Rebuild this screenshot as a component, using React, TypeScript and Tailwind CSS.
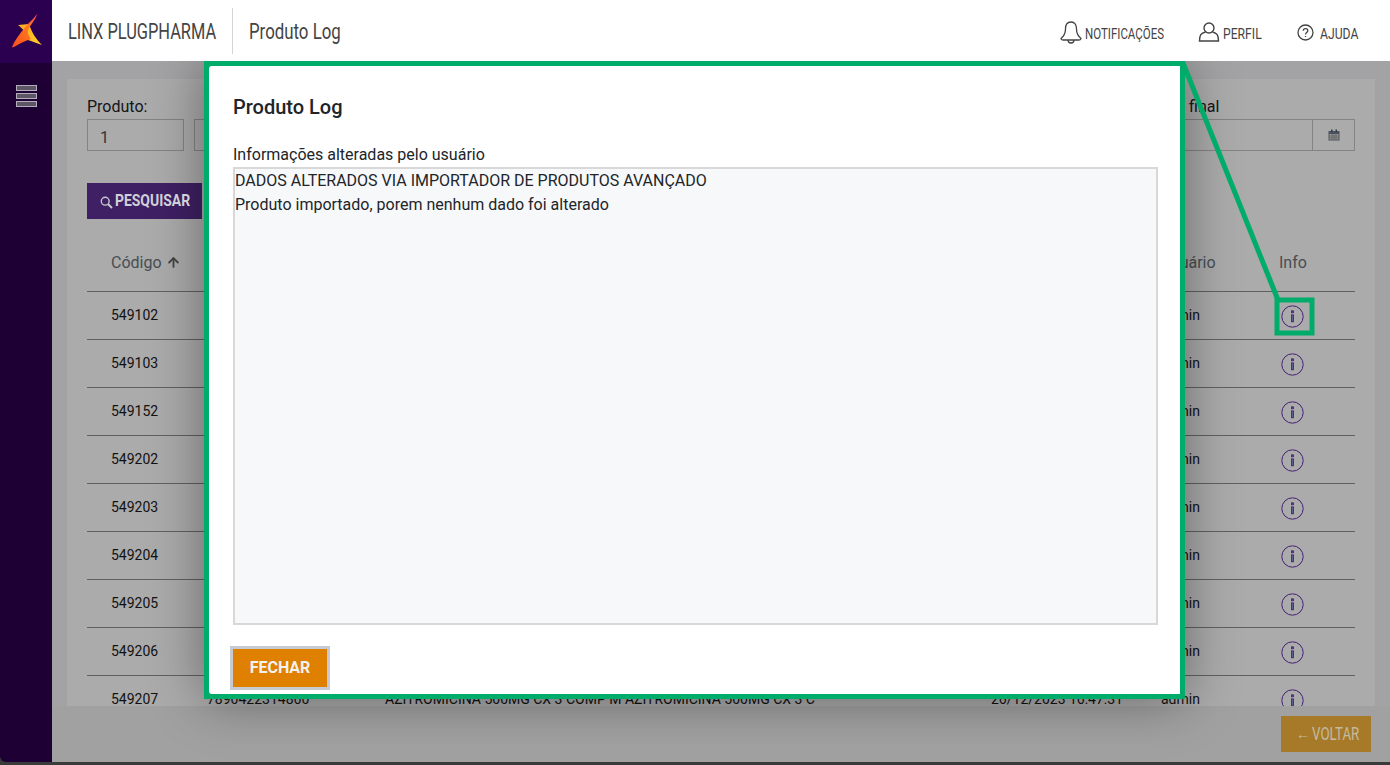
import { ArrowUp } from "lucide-react";

const rows = [
  "549102",
  "549103",
  "549152",
  "549202",
  "549203",
  "549204",
  "549205",
  "549206",
];

function InfoIcon() {
  return (
    <svg width="23" height="23" viewBox="0 0 23 23" fill="none" stroke="#6a2fb0" className="mt-[2px]">
      <circle cx="11.5" cy="11.5" r="10.7" strokeWidth="1" />
      <rect x="10.4" y="5.8" width="2.2" height="2" fill="#6a5ac0" strokeWidth="0.7" />
      <rect x="10.4" y="9.8" width="2.2" height="7" fill="#8a8ad0" strokeWidth="0.8" />
    </svg>
  );
}

function Row({ code }: { code: string }) {
  return (
    <div className="flex h-12 items-center border-t border-[#8f8f8f] text-sm text-[#1c1c1c]">
      <div className="w-[298px] pb-[1px] pl-6">{code}</div>
      <div className="flex-1" />
      <div className="w-[118px] pb-[1px]">admin</div>
      <div className="w-[76px] pl-[2px]">
        <InfoIcon />
      </div>
    </div>
  );
}

export default function App() {
  return (
    <div className="relative flex h-[765px] w-[1390px] overflow-hidden bg-[#3a3a3a] font-['Roboto',sans-serif]">
      {/* Sidebar */}
      <aside className="flex h-[762px] w-[52px] shrink-0 flex-col rounded-bl-md bg-[#1e0034]">
        <div className="flex h-[63px] items-center justify-center bg-[#2c0050] pb-[2px] pl-[2px]">
          <svg width="34" height="36" viewBox="0 0 34 36">
            <defs>
              <linearGradient id="bolt" x1="0" y1="1" x2="1" y2="0">
                <stop offset="0" stopColor="#f8481f" />
                <stop offset="0.6" stopColor="#ff7a1e" />
                <stop offset="1" stopColor="#f8405a" />
              </linearGradient>
              <linearGradient id="wing" x1="0" y1="0" x2="1" y2="1">
                <stop offset="0" stopColor="#ffa81e" />
                <stop offset="1" stopColor="#ffd02a" />
              </linearGradient>
            </defs>
            <path d="M8 12 L19 11 C22 20 26 26 32 32 C26 30 22 28 18 27 C17 20 12 15 8 12 Z" fill="url(#wing)" />
            <path d="M27 1 C24 5 20 9 17 12 C11 19 5 27 2 34 C3 34.5 4 34 5 33.5 C10 30 15 28 21 26 C18 22 17 19 19 15 C22 10 26 6 27 1 Z" fill="url(#bolt)" />
          </svg>
        </div>
        <div className="flex flex-col items-center gap-[2px] pt-[22px]">
          <div className="h-[6px] w-[21px] border border-[#b4aebc] bg-[#5f5569]" />
          <div className="h-[6px] w-[21px] border border-[#b4aebc] bg-[#5f5569]" />
          <div className="h-[6px] w-[21px] border border-[#b4aebc] bg-[#5f5569]" />
        </div>
      </aside>

      <div className="flex h-[762px] flex-1 flex-col">
        {/* Top bar */}
        <header className="relative z-20 flex h-[61px] shrink-0 items-center bg-white pl-4 text-[#444]">
          <span className="mt-[2px] w-[148px] origin-left scale-x-[.745] whitespace-nowrap text-[22px] leading-none">LINX PLUGPHARMA</span>
          <div className="ml-4 h-[46px] w-px bg-[#d4d4d4]" />
          <span className="ml-4 mt-[2px] w-[92px] origin-left scale-x-[.765] whitespace-nowrap text-[22px] leading-none">Produto Log</span>
          <div className="ml-auto flex items-center pr-[31px] pt-[7px] text-sm">
            <svg width="24" height="24" viewBox="0 0 24 24" fill="none" stroke="#444" strokeWidth="1.3" className="mr-[2px] -mt-1">
              <path d="M12 2 C8 2 6.5 5 6.5 9 C6.5 13 5 16 2 18.5 C2 19.5 3 20 4 20 L20 20 C21 20 22 19.5 22 18.5 C19 16 17.5 13 17.5 9 C17.5 5 16 2 12 2 Z" />
              <path d="M9 20 C9 22 10.5 23 12 23 C13.5 23 15 22 15 20" />
            </svg>
            <span className="w-[80px] origin-left scale-x-[.82] whitespace-nowrap">NOTIFICAÇÕES</span>
            <svg width="22" height="22" viewBox="0 0 22 22" fill="none" stroke="#444" strokeWidth="1.4" className="ml-[33px] -mt-1">
              <circle cx="11" cy="7" r="5" />
              <path d="M7.5 11 C3 12 1.5 14 1.5 20 L20.5 20 C20.5 14 19 12 14.5 11" />
            </svg>
            <span className="ml-[3px] w-[39px] origin-left scale-x-[.87] whitespace-nowrap">PERFIL</span>
            <svg width="17" height="17" viewBox="0 0 17 17" fill="none" stroke="#444" strokeWidth="1.3" className="ml-[35px] -mt-1">
              <circle cx="8.5" cy="8.5" r="7.5" />
              <path d="M6.3 6.8 C6.3 4 10.8 4 10.8 6.8 C10.8 8.6 8.5 8.6 8.5 10.4" />
              <path d="M8.5 12 L8.5 13" />
            </svg>
            <span className="ml-[6px] w-[39px] origin-left scale-x-[.87] whitespace-nowrap">AJUDA</span>
          </div>
        </header>

        {/* Page content */}
        <main className="flex min-h-0 flex-1 flex-col bg-[#f3f4f6]">
          <div className="mx-[15px] mt-[18px] min-h-0 flex-1 overflow-hidden bg-white px-5 pt-[18px]">
            <div className="flex justify-between">
              <div>
                <div className="text-base leading-[20px] text-[#212529]">Produto:</div>
                <div className="mt-[2px] flex gap-[10px]">
                  <div className="flex h-8 w-[97px] items-center border border-[#c4c4c4] pl-3 pt-[6px] text-base text-[#495057]">1</div>
                  <div className="h-8 w-[97px] border border-[#c4c4c4]" />
                </div>
              </div>
              <div className="w-[203px]">
                <div className="text-base leading-[20px] text-[#212529]">Data final</div>
                <div className="mt-[2px] flex h-8 border border-[#c4c4c4]">
                  <div className="flex-1" />
                  <div className="flex w-[42px] items-center justify-center border-l border-[#c4c4c4]">
                    <svg width="12" height="12" viewBox="0 0 12 12">
                      <path d="M0.5 2 H11.5 V11.5 H0.5 Z" fill="#6e7c8e" />
                      <path d="M1.5 5 H10.5 V10.5 H1.5 Z" fill="#e6e2dc" />
                      <path d="M3 0.5 H4.5 V3 H3 Z M7.5 0.5 H9 V3 H7.5 Z" fill="#4c5a6a" />
                      <path d="M1.5 7 H10.5 M1.5 8.8 H10.5 M4 5 V10.5 M6 5 V10.5 M8 5 V10.5" stroke="#8a8a92" strokeWidth="0.7" />
                    </svg>
                  </div>
                </div>
              </div>
            </div>

            <button className="mt-[32px] flex h-9 w-[115px] items-center gap-[2px] bg-[#5f3195] pl-[13px]">
              <svg width="13" height="13" viewBox="0 0 13 13" fill="none" stroke="#c8c8d0" className="relative z-[15] mt-[3px] shrink-0">
                <circle cx="5.2" cy="5.2" r="3.9" strokeWidth="1.4" />
                <path d="M8 8 L12 12" strokeWidth="2" />
              </svg>
              <span className="relative z-[15] w-[76px] origin-left scale-x-[.87] whitespace-nowrap text-base font-bold text-[#d0d0d8]">PESQUISAR</span>
            </button>

            <div className="mt-[21px] flex h-[51px] items-center pb-[6px] text-base text-[#6c757d]">
              <div className="flex w-[298px] items-center gap-1 pl-6">
                Código <ArrowUp size={15} strokeWidth={3} className="text-[#666]" />
              </div>
              <div className="flex-1" />
              <div className="w-[118px]">Usuário</div>
              <div className="w-[76px]">Info</div>
            </div>

            {rows.map((code) => (
              <Row key={code} code={code} />
            ))}
            <div className="flex h-12 items-center border-t border-[#8f8f8f] text-sm text-[#1c1c1c]">
              <div className="w-[120px] pb-[1px] pl-6">549207</div>
              <div className="w-[178px] pb-[1px]">7890422314860</div>
              <div className="w-[606px] whitespace-nowrap pb-[1px]">AZITROMICINA 500MG CX 3 COMP M AZITROMICINA 500MG CX 3 C</div>
              <div className="flex-1 whitespace-nowrap pb-[1px]">26/12/2023 16:47:31</div>
              <div className="w-[118px] pb-[1px]">admin</div>
              <div className="w-[76px] pl-[2px]">
                <InfoIcon />
              </div>
            </div>
          </div>

          <footer className="flex h-[56px] shrink-0 items-start justify-end bg-[#f0f0f0] pr-[19px] pt-[10px]">
            <div className="flex h-9 w-[90px] items-center gap-[2px] bg-[#f8b63c] pl-[15px]">
              <span className="relative z-[15] text-sm leading-none text-[#c4bba0]">←</span>
              <span className="relative z-[15] w-[47px] origin-left scale-x-[.74] whitespace-nowrap text-lg leading-none text-[#c4bba0]">VOLTAR</span>
            </div>
          </footer>
        </main>
      </div>

      {/* Modal backdrop */}
      <div className="absolute left-[52px] right-0 top-[61px] z-10 h-[701px] bg-black/[.33]" />

      {/* Modal */}
      <div className="absolute left-[204px] top-[61px] z-10 h-[638px] w-[981px] bg-[#00ac69] p-[5px] shadow-[0_0_50px_rgba(0,0,0,.4)]">
        <div className="flex h-full flex-col rounded-l-[3px] bg-white pl-6 pr-[22px] pt-[29px]">
          <h2 className="text-xl font-medium leading-[24px] text-[#212529]">Produto Log</h2>
          <label className="mt-[26px] text-base leading-[20px] text-[#212529]">Informações alteradas pelo usuário</label>
          <div className="mt-[2px] h-[458px] border-2 border-[#d8d8d8] bg-[#f7f8fa] text-base leading-[24px] text-[#212529]">
            <div>DADOS ALTERADOS VIA IMPORTADOR DE PRODUTOS AVANÇADO</div>
            <div>Produto importado, porem nenhum dado foi alterado</div>
          </div>
          <button className="mt-[21px] h-[44px] w-[100px] -translate-x-[3px] border-[3px] border-[#c5cad3] bg-[#e08000] text-base font-bold text-[#f2f2f2]">
            FECHAR
          </button>
        </div>
      </div>

      {/* Annotation callout */}
      <svg className="absolute left-0 top-0 z-20" width="1390" height="765" fill="none" stroke="#00ac69" pointerEvents="none">
        <path d="M1183 63 L1278 300" strokeWidth="5" />
        <rect x="1277" y="300" width="35" height="33" strokeWidth="5" />
      </svg>
    </div>
  );
}
